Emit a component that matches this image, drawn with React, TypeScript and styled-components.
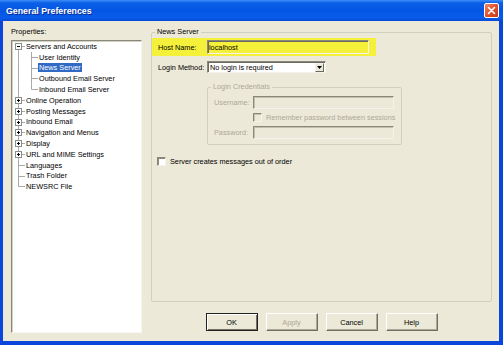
import React from 'react';
import styled, { createGlobalStyle } from 'styled-components';

const GlobalStyle = createGlobalStyle`
    html, body {
        margin: 0;
        padding: 0;
        background: #ece9d8;
    }
    body {
        font-family: "Liberation Sans", Arial, sans-serif;
    }
`;

const Window = styled.div`
    width: 503px;
    height: 345px;
    display: flex;
    flex-direction: column;
    background: #0a45dc;
    box-sizing: border-box;
`;

const TitleBar = styled.div`
    height: 21px;
    flex: none;
    display: flex;
    align-items: center;
    justify-content: space-between;
    padding: 0 4px 0 6px;
    background: linear-gradient(#3d8cf7 0, #0b5fe6 3px, #0356e4 50%, #0a5be9 85%, #0649da 100%);
`;

const Title = styled.span`
    color: #fff;
    font-weight: bold;
    font-size: 8.8px;
    text-shadow: 1px 1px #0a2a8c;
`;

const CloseButton = styled.div`
    width: 15px;
    height: 15px;
    box-sizing: border-box;
    border: 1px solid #fff;
    border-radius: 2px;
    background: linear-gradient(135deg, #f08a6c 0%, #e2552f 45%, #c8391a 100%);
    display: flex;
    align-items: center;
    justify-content: center;
`;

const Client = styled.div`
    flex: 1;
    margin: 0 4px 4px 3px;
    background: #ece9d8;
    display: flex;
    gap: 9px;
    padding: 6px 7px 8px 8px;
    font-size: 7.3px;
    color: #000;
`;

const LeftPanel = styled.div`
    width: 131px;
    display: flex;
    flex-direction: column;
`;

const Caption = styled.div`
    line-height: 10px;
    margin-bottom: 3px;
`;

const Tree = styled.div`
    flex: 1;
    background: #fff;
    border: 1px solid;
    border-color: #8a887a #f7f6f0 #f7f6f0 #8a887a;
    box-shadow: inset 1px 1px #d4d1c2;
`;

const TreeRow = styled.div`
    height: 10.8px;
    display: flex;
    align-items: center;
`;

const Gutter = styled.svg`
    width: 13px;
    height: 10.8px;
    flex: none;
`;

const TreeLabel = styled.span<{ $selected?: boolean }>`
    padding: 0 1px;
    line-height: 9px;
    white-space: nowrap;
    background: ${p => (p.$selected ? '#316ac5' : 'transparent')};
    color: ${p => (p.$selected ? '#fff' : '#000')};
`;

const RightPanel = styled.div`
    flex: 1;
    display: flex;
    flex-direction: column;
`;

const Group = styled.fieldset`
    margin: 0;
    padding: 1px 0 0 0;
    border: 1px solid #d0d0bf;
    border-radius: 2px;
    min-width: 0;
`;

const MainGroup = styled(Group)`
    flex: 1;
`;

const CredGroup = styled(Group)`
    width: 195px;
    box-sizing: border-box;
    margin: 9px 0 0 55px;
    padding: 4px 0 5px 0;
`;

const Legend = styled.legend<{ $disabled?: boolean }>`
    margin-left: 3px;
    padding: 0 2px;
    line-height: 10px;
    color: ${p => (p.$disabled ? '#aca899' : '#000')};
`;

const Column = styled.div`
    display: flex;
    flex-direction: column;
    align-items: flex-start;
`;

const HighlightRow = styled.div`
    width: 224px;
    height: 18px;
    box-sizing: border-box;
    padding-left: 6px;
    display: flex;
    align-items: center;
    background: #f5f13a;
`;

const FieldRow = styled.div<{ $top?: number; $left?: number }>`
    display: flex;
    align-items: center;
    margin-top: ${p => p.$top ?? 0}px;
    padding-left: ${p => p.$left ?? 0}px;
`;

const Label = styled.span<{ $width: number; $disabled?: boolean }>`
    width: ${p => p.$width}px;
    flex: none;
    white-space: nowrap;
    color: ${p => (p.$disabled ? '#aca899' : '#000')};
`;

const TextBox = styled.div<{ $width: number; $height: number; $disabled?: boolean; $bg?: string }>`
    width: ${p => p.$width}px;
    height: ${p => p.$height}px;
    box-sizing: border-box;
    border: 1px solid;
    border-color: #8a887a #f4f3ee #f4f3ee #8a887a;
    box-shadow: ${p => (p.$disabled ? 'inset 1px 1px #c2bfae' : 'inset 1px 1px #6a6a60')};
    background: ${p => p.$bg ?? (p.$disabled ? '#ece9d8' : '#fff')};
    padding-left: 1px;
    display: flex;
    align-items: center;
    line-height: 9px;
`;

const Select = styled.div`
    width: 119px;
    height: 12px;
    box-sizing: border-box;
    border: 1px solid;
    border-color: #8a887a #f4f3ee #f4f3ee #8a887a;
    box-shadow: inset 1px 1px #6a6a60;
    background: #fff;
    display: flex;
    align-items: center;
    padding: 1px 1px 1px 2px;
`;

const SelectValue = styled.span`
    flex: 1;
    line-height: 9px;
`;

const DropButton = styled.div`
    width: 9px;
    height: 9px;
    background: #ece9d8;
    border: 1px solid;
    border-color: #f4f3ee #6a6a60 #6a6a60 #f4f3ee;
    box-sizing: border-box;
    display: flex;
    align-items: center;
    justify-content: center;
`;

const Check = styled.span<{ $size: number; $disabled?: boolean }>`
    width: ${p => p.$size}px;
    height: ${p => p.$size}px;
    flex: none;
    box-sizing: border-box;
    border: 1px solid;
    border-color: #8a887a #f4f3ee #f4f3ee #8a887a;
    box-shadow: inset 1px 1px ${p => (p.$disabled ? '#c2bfae' : '#8a887a')};
    background: ${p => (p.$disabled ? '#ece9d8' : '#fff')};
    margin-right: 4px;
`;

const ButtonBar = styled.div`
    display: flex;
    justify-content: center;
    gap: 8px;
    margin-top: 11px;
    margin-bottom: 2px;
`;

const Button = styled.div<{ $default?: boolean; $disabled?: boolean }>`
    width: 52px;
    height: 18px;
    box-sizing: border-box;
    display: flex;
    align-items: center;
    justify-content: center;
    background: #ece9d8;
    border: 1px solid;
    border-color: ${p => (p.$default ? '#222' : '#fff #716f64 #716f64 #fff')};
    box-shadow: ${p =>
        p.$default
            ? 'inset 1px 1px #fff, inset -1px -1px #716f64'
            : 'inset -1px -1px #aca899'};
    color: ${p => (p.$disabled ? '#aca899' : '#000')};
`;

type Line = 'first' | 'tee' | 'last' | 'pipe';

const TreeLine = ({ kind, box }: { kind: Line; box?: 'plus' | 'minus' }) => {
    const h = 10.8;
    const mid = 5.5;
    const y1 = kind === 'first' ? mid : 0;
    const y2 = kind === 'last' ? mid : h;
    return (
        <Gutter viewBox={`0 0 13 ${h}`}>
            <line x1={6.5} y1={y1} x2={6.5} y2={y2} stroke="#a8a8a8" strokeWidth={1} />
            {kind !== 'pipe' && <line x1={6.5} y1={mid} x2={13} y2={mid} stroke="#a8a8a8" strokeWidth={1} />}
            {box && (
                <>
                    <rect x={3.5} y={mid - 3} width={6} height={6} fill="#fff" stroke="#8c8c8c" strokeWidth={1} />
                    <line x1={5} y1={mid} x2={8} y2={mid} stroke="#000" strokeWidth={1} />
                    {box === 'plus' && <line x1={6.5} y1={mid - 1.5} x2={6.5} y2={mid + 1.5} stroke="#000" strokeWidth={1} />}
                </>
            )}
        </Gutter>
    );
};

type Node = { label: string; kind: Line; depth?: number; box?: 'plus' | 'minus'; selected?: boolean };

const nodes: Node[] = [
    { label: 'Servers and Accounts', kind: 'first', box: 'minus' },
    { label: 'User Identity', kind: 'tee', depth: 1 },
    { label: 'News Server', kind: 'tee', depth: 1, selected: true },
    { label: 'Outbound Email Server', kind: 'tee', depth: 1 },
    { label: 'Inbound Email Server', kind: 'last', depth: 1 },
    { label: 'Online Operation', kind: 'tee', box: 'plus' },
    { label: 'Posting Messages', kind: 'tee', box: 'plus' },
    { label: 'Inbound Email', kind: 'tee', box: 'plus' },
    { label: 'Navigation and Menus', kind: 'tee', box: 'plus' },
    { label: 'Display', kind: 'tee', box: 'plus' },
    { label: 'URL and MIME Settings', kind: 'tee', box: 'plus' },
    { label: 'Languages', kind: 'tee' },
    { label: 'Trash Folder', kind: 'tee' },
    { label: 'NEWSRC File', kind: 'last' },
];

export default function App() {
    return (
        <>
            <GlobalStyle />
            <Window>
                <TitleBar>
                    <Title>General Preferences</Title>
                    <CloseButton>
                        <svg width="9" height="9" viewBox="0 0 9 9">
                            <path d="M1.5 1.5 L7.5 7.5 M7.5 1.5 L1.5 7.5" stroke="#fff" strokeWidth="1.6" strokeLinecap="round" />
                        </svg>
                    </CloseButton>
                </TitleBar>
                <Client>
                    <LeftPanel>
                        <Caption>Properties:</Caption>
                        <Tree>
                            {nodes.map(n => (
                                <TreeRow key={n.label}>
                                    {n.depth === 1 && <TreeLine kind="pipe" />}
                                    <TreeLine kind={n.kind} box={n.box} />
                                    <TreeLabel $selected={n.selected}>{n.label}</TreeLabel>
                                </TreeRow>
                            ))}
                        </Tree>
                    </LeftPanel>
                    <RightPanel>
                        <MainGroup>
                            <Legend>News Server</Legend>
                            <Column>
                                <HighlightRow>
                                    <Label $width={49}>Host Name:</Label>
                                    <TextBox $width={162} $height={14} $bg="#f5f13a">localhost</TextBox>
                                </HighlightRow>
                                <FieldRow $top={5} $left={6}>
                                    <Label $width={49}>Login Method:</Label>
                                    <Select>
                                        <SelectValue>No login is required</SelectValue>
                                        <DropButton>
                                            <svg width="5" height="3" viewBox="0 0 5 3">
                                                <path d="M0 0 H5 L2.5 3 Z" fill="#000" />
                                            </svg>
                                        </DropButton>
                                    </Select>
                                </FieldRow>
                                <CredGroup>
                                    <Legend $disabled>Login Credentials</Legend>
                                    <Column>
                                        <FieldRow $left={6}>
                                            <Label $width={39} $disabled>Username:</Label>
                                            <TextBox $width={141} $height={13} $disabled />
                                        </FieldRow>
                                        <FieldRow $top={4} $left={45}>
                                            <Check $size={9} $disabled />
                                            <Label $width={130} $disabled>Remember password between sessions</Label>
                                        </FieldRow>
                                        <FieldRow $top={4} $left={6}>
                                            <Label $width={39} $disabled>Password:</Label>
                                            <TextBox $width={141} $height={13} $disabled />
                                        </FieldRow>
                                    </Column>
                                </CredGroup>
                                <FieldRow $top={12} $left={5}>
                                    <Check $size={9} />
                                    <Label $width={160}>Server creates messages out of order</Label>
                                </FieldRow>
                            </Column>
                        </MainGroup>
                        <ButtonBar>
                            <Button $default>OK</Button>
                            <Button $disabled>Apply</Button>
                            <Button>Cancel</Button>
                            <Button>Help</Button>
                        </ButtonBar>
                    </RightPanel>
                </Client>
            </Window>
        </>
    );
}
